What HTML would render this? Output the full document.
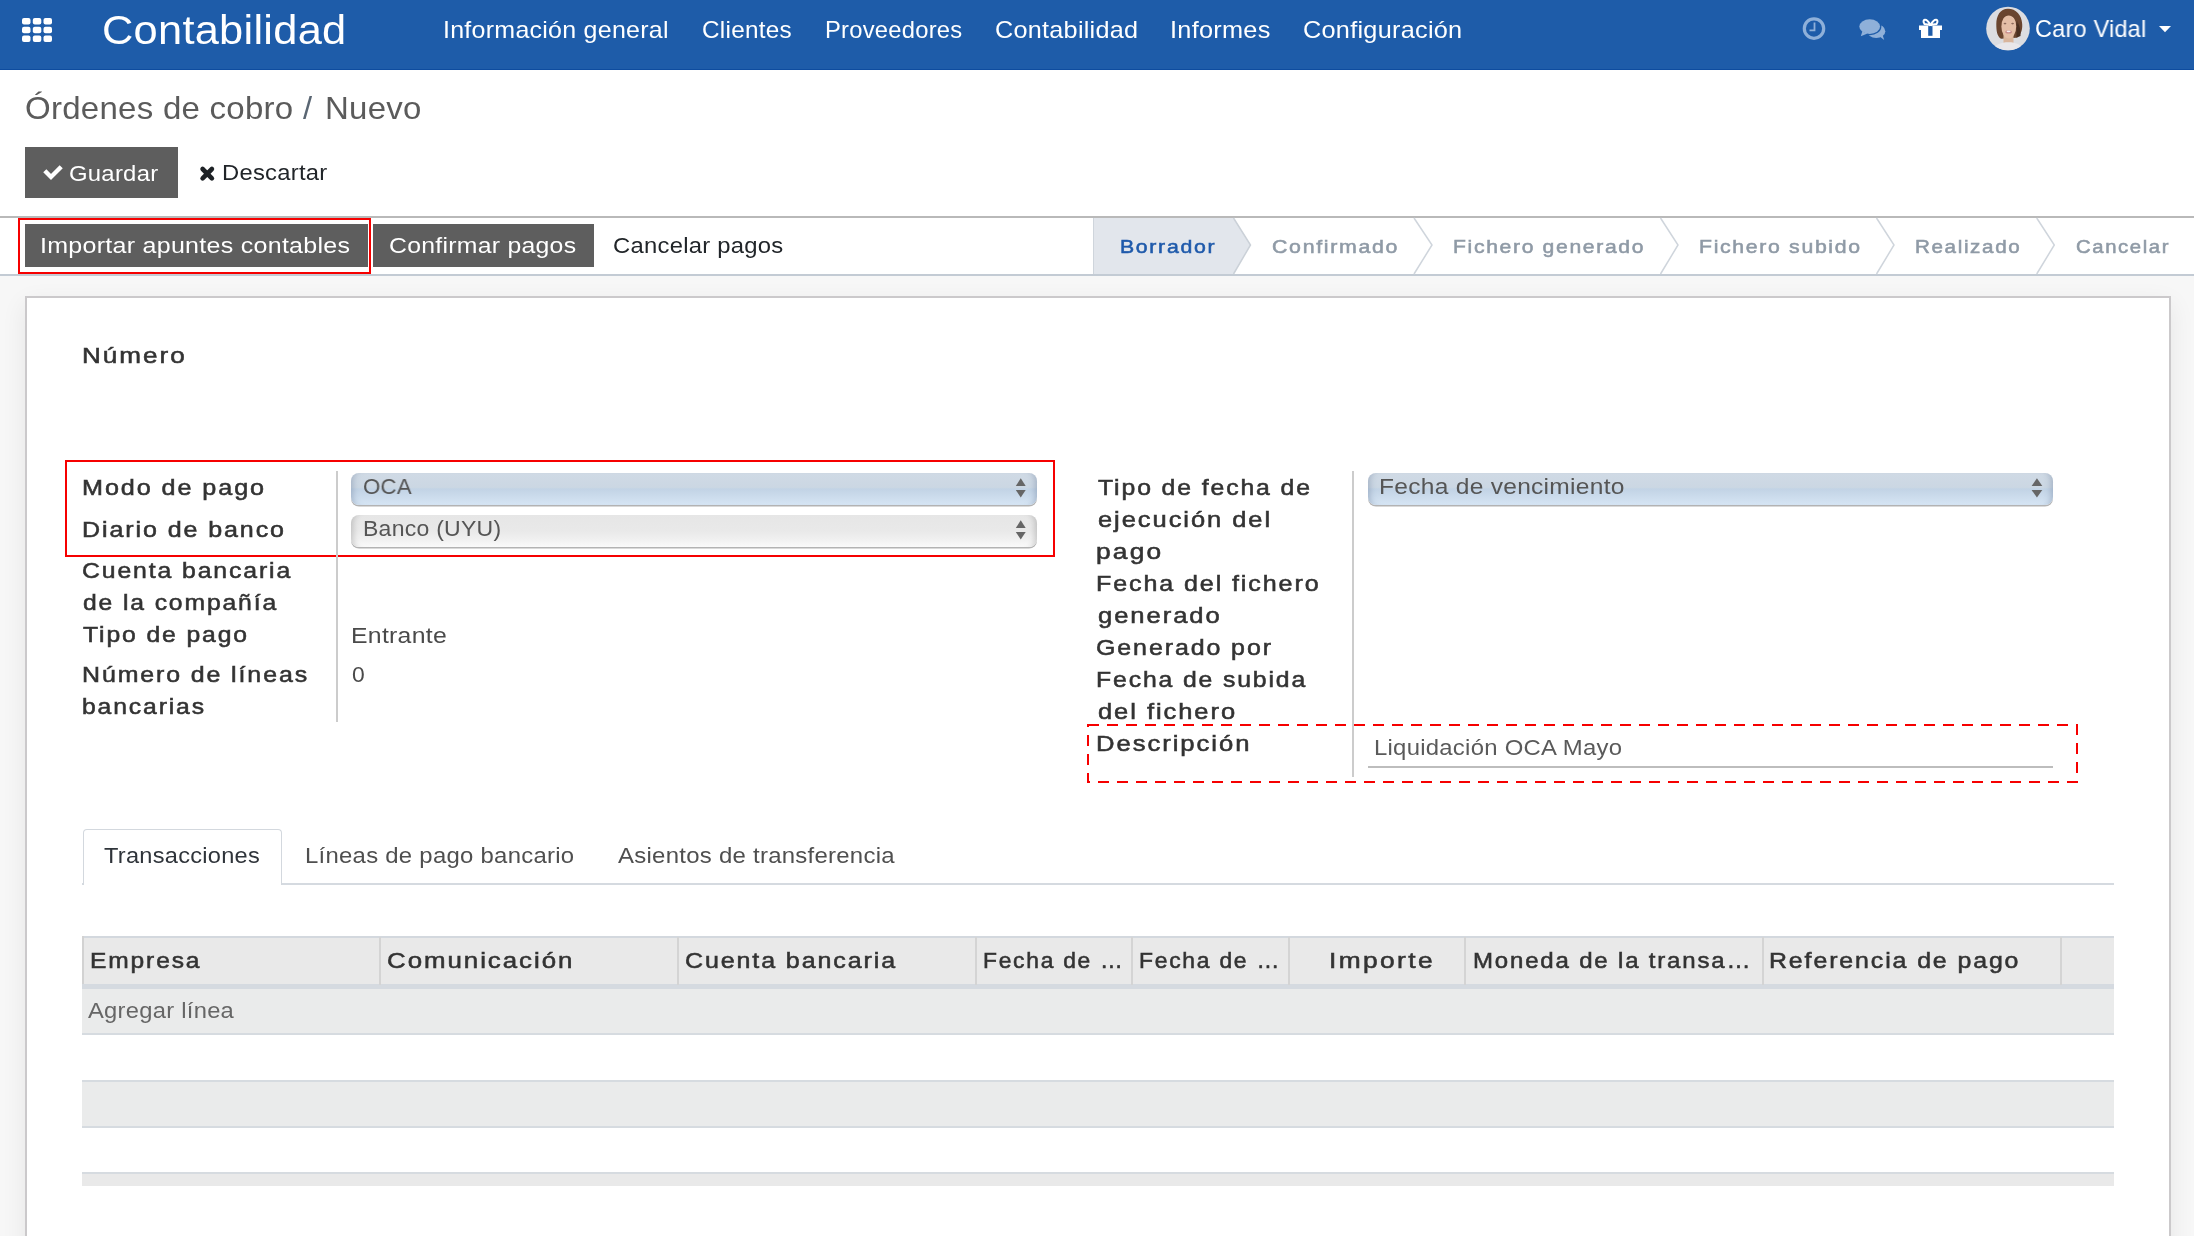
<!DOCTYPE html>
<html><head><meta charset="utf-8"><style>
html,body{margin:0;padding:0;}
body{width:2194px;height:1236px;overflow:hidden;position:relative;background:#f7f7f7;font-family:"Liberation Sans",sans-serif;}
.a{position:absolute;box-sizing:border-box;}
.tx{position:absolute;white-space:nowrap;font-family:"Liberation Sans",sans-serif;will-change:transform;transform-origin:0 0;}
</style></head><body>
<!-- navbar -->
<div class="a" style="left:0;top:0;width:2194px;height:70px;background:#1e5ca9;border-bottom:1px solid #0e4c9f;"></div>
<svg class="a" style="left:0;top:0" width="2194" height="70">
  <g fill="#ffffff">
    <rect x="22" y="18" width="8.5" height="6.5" rx="2"/><rect x="32.8" y="18" width="8.5" height="6.5" rx="2"/><rect x="43.5" y="18" width="8.5" height="6.5" rx="2"/>
    <rect x="22" y="26.8" width="8.5" height="6.5" rx="2"/><rect x="32.8" y="26.8" width="8.5" height="6.5" rx="2"/><rect x="43.5" y="26.8" width="8.5" height="6.5" rx="2"/>
    <rect x="22" y="35.5" width="8.5" height="6.5" rx="2"/><rect x="32.8" y="35.5" width="8.5" height="6.5" rx="2"/><rect x="43.5" y="35.5" width="8.5" height="6.5" rx="2"/>
  </g>
  <!-- clock -->
  <g fill="none" stroke="#8fb0d9" stroke-width="3.2">
    <circle cx="1814" cy="28.6" r="9.7"/>
  </g>
  <path d="M1814.5 22.5 V30.3 H1809.5" fill="none" stroke="#8fb0d9" stroke-width="1.8"/>
  <!-- chat -->
  <g fill="#8fb0d9">
    <ellipse cx="1876.2" cy="31.2" rx="9.1" ry="6.9"/>
    <path d="M1879 36 L1884.2 40 L1882.6 35 Z"/>
  </g>
  <ellipse cx="1869.7" cy="26.6" rx="10.4" ry="7.3" fill="#8fb0d9" stroke="#1e5ca9" stroke-width="2.6"/>
  <ellipse cx="1869.7" cy="26.6" rx="10.4" ry="7.3" fill="#8fb0d9"/>
  <path d="M1862.3 31.5 L1860.8 36.2 L1867.5 33.6 Z" fill="#8fb0d9"/>
  <!-- gift -->
  <g fill="#ffffff">
    <path d="M1919 25.5 H1942 V30 H1940 V38 H1921 V30 H1919 Z"/>
  </g>
  <rect x="1928.2" y="25.2" width="4.3" height="10.6" fill="#1e5ca9"/>
  <g fill="none" stroke="#ffffff" stroke-width="2">
    <path d="M1930.5 25 C1926 17 1921.5 19.5 1924.5 24 Z"/>
    <path d="M1930.5 25 C1935 17 1939.5 19.5 1936.5 24 Z"/>
  </g>
  <!-- avatar -->
  <defs><clipPath id="av"><circle cx="2008" cy="28.5" r="21.8"/></clipPath></defs>
  <circle cx="2008" cy="28.5" r="21.8" fill="#dcdde1"/>
  <g clip-path="url(#av)">
    <path d="M2008 8.8 C2000 8.8 1996.3 16 1996.3 24 C1996.3 31 1997 36 2001 38.8 L2016.5 37.8 C2021 35 2022.6 30 2022.2 24 C2021.7 15 2016 8.8 2008 8.8 Z" fill="#6a452f"/>
    <path d="M2016.5 20 C2019 24 2021 30 2020.5 36 L2016.5 37.8 Z" fill="#4a2f20"/>
    <rect x="2003.5" y="34" width="10" height="10" fill="#d9b59c"/>
    <ellipse cx="2008.8" cy="26.5" rx="7.4" ry="12" fill="#e4bea6"/>
    <path d="M1999.5 25 C1999.5 17 2004 13.2 2009 13.6 C2014 14 2017.5 18 2017.8 25 C2016 19 2012.5 15.8 2008.8 15.6 C2004.5 16 2001.2 19.5 1999.5 25 Z" fill="#6a452f"/>
    <path d="M1991 53 C1993 45.5 2000 42.3 2008.5 42.3 C2017 42.3 2023 45.5 2025 53 Z" fill="#e9e7ea"/>
    <ellipse cx="2005" cy="23.6" rx="1.4" ry="0.8" fill="#8c6a5c"/>
    <ellipse cx="2012.6" cy="23.6" rx="1.4" ry="0.8" fill="#8c6a5c"/>
    <ellipse cx="2008.6" cy="31.9" rx="3.3" ry="1.7" fill="#c98c8c"/>
    <ellipse cx="2008.6" cy="31.4" rx="2.1" ry="0.8" fill="#f4eded"/>
  </g>
  <!-- caret -->
  <path d="M2159 26 H2171 L2165 32.2 Z" fill="#ffffff"/>
</svg>

<!-- control panel white -->
<div class="a" style="left:0;top:70px;width:2194px;height:146px;background:#ffffff;"></div>
<!-- Guardar button -->
<div class="a" style="left:25px;top:147px;width:153px;height:51px;background:#5e5e5e;"></div>
<svg class="a" style="left:0;top:140px" width="240" height="60">
  <path d="M44.8 30.8 L51 37 L61.2 26.8" fill="none" stroke="#ffffff" stroke-width="4.4" stroke-linejoin="miter"/>
  <path d="M202.6 29 L211.9 38.3 M211.9 29 L202.6 38.3" fill="none" stroke="#1e2226" stroke-width="4.6" stroke-linecap="round"/>
</svg>

<!-- statusbar -->
<div class="a" style="left:0;top:216px;width:2194px;height:60px;background:#ffffff;border-top:2px solid #b9b9b9;border-bottom:2px solid #c3cbd4;"></div>
<div class="a" style="left:25px;top:224px;width:343px;height:43px;background:#5e5e5e;"></div>
<div class="a" style="left:373px;top:224px;width:221px;height:43px;background:#5e5e5e;"></div>
<div class="a" style="left:18px;top:218px;width:353px;height:56px;border:2px solid #f60000;"></div>
<svg class="a" style="left:0;top:0" width="2194" height="280">
  <polygon points="1093,218 1233.5,218 1250.5,245 1233.5,274 1093,274" fill="#e2e6ec"/>
  <line x1="1093.5" y1="218" x2="1093.5" y2="274" stroke="#cfd5dc" stroke-width="1"/>
  <polyline points="1233.5,218 1250.5,245 1233.5,274" fill="none" stroke="#cbd1d8" stroke-width="1.5"/>
  <g fill="none" stroke="#cfd5dc" stroke-width="1.5">
    <polyline points="1414,218 1432,245 1414,274"/>
    <polyline points="1660.5,218 1678,245 1660.5,274"/>
    <polyline points="1876.5,218 1894,245 1876.5,274"/>
    <polyline points="2036.7,218 2054.3,245 2036.7,274"/>
  </g>
</svg>

<!-- sheet -->
<div class="a" style="left:25px;top:296px;width:2146px;height:1000px;background:#ffffff;border:2px solid #cbc9cb;box-shadow:0 8px 24px rgba(0,0,0,0.075);"></div>

<!-- left group -->
<div class="a" style="left:65px;top:460px;width:990px;height:97px;border:2px solid #f60000;"></div>
<div class="a" style="left:336px;top:471px;width:1.5px;height:251px;background:#cccccc;"></div>
<div class="a" style="left:351px;top:473px;width:686px;height:32px;border-radius:8px;background:linear-gradient(#d0dae5 0%,#cbd7e3 45%,#c2d3e5 50%,#d6e5f4 100%);box-shadow:inset 8px 0 6px -6px rgba(90,110,140,0.35), inset -8px 0 6px -6px rgba(90,110,140,0.35), 0 1.5px 0 #b3b3b3;"></div>
<div class="a" style="left:351px;top:515px;width:686px;height:32px;border-radius:8px;background:linear-gradient(#e6e6e6 0%,#e9e9e9 50%,#f0f0f0 75%,#fafafa 100%);box-shadow:inset 8px 0 6px -6px rgba(0,0,0,0.18), inset -8px 0 6px -6px rgba(0,0,0,0.18), 0 1.5px 0 #b3b3b3;"></div>


<!-- right group -->
<div class="a" style="left:1352px;top:471px;width:1.5px;height:306px;background:#cccccc;"></div>
<div class="a" style="left:1368px;top:473px;width:685px;height:31.5px;border-radius:8px;background:linear-gradient(#d0dae5 0%,#cbd7e3 45%,#c2d3e5 50%,#d6e5f4 100%);box-shadow:inset 8px 0 6px -6px rgba(90,110,140,0.35), inset -8px 0 6px -6px rgba(90,110,140,0.35), 0 1.5px 0 #b3b3b3;"></div>
<div class="a" style="left:1368px;top:766px;width:685px;height:2px;background:#bdbdbd;"></div>
<svg class="a" style="left:1085px;top:722px" width="995" height="64">
  <rect x="3" y="3" width="989" height="57" fill="none" stroke="#f60000" stroke-width="2" stroke-dasharray="11 8"/>
</svg>

<svg class="a" style="left:0;top:0" width="2194" height="800">
  <g fill="#666666">
    <polygon points="1015.8,486 1025.7,486 1020.75,478.2"/>
    <polygon points="1015.8,490 1025.7,490 1020.75,497.6"/>
    <polygon points="1015.8,528 1025.7,528 1020.75,520.3"/>
    <polygon points="1015.8,532 1025.7,532 1020.75,539.6"/>
    <polygon points="2031.6,486 2042.3,486 2036.95,478.2"/>
    <polygon points="2031.6,490 2042.3,490 2036.95,497.6"/>
  </g>
</svg>
<!-- tabs -->
<div class="a" style="left:82px;top:883px;width:2032px;height:1.5px;background:#d5dae0;"></div>
<div class="a" style="left:82.5px;top:828.5px;width:199px;height:56px;background:#ffffff;border:1.5px solid #d3d8de;border-bottom:none;border-radius:4px 4px 0 0;"></div>

<!-- table -->
<div class="a" style="left:82px;top:936px;width:2032px;height:53px;background:#e9e9e9;border-top:2px solid #d3d8de;border-bottom:5px solid #d5dae0;"></div>
<div class="a" style="left:82px;top:936px;width:1.5px;height:48px;background:#d2d2d2;"></div>
<div class="a" style="left:379.25px;top:937px;width:1.5px;height:48px;background:#d4d4d4;"></div>
<div class="a" style="left:677.25px;top:937px;width:1.5px;height:48px;background:#d4d4d4;"></div>
<div class="a" style="left:975.25px;top:937px;width:1.5px;height:48px;background:#d4d4d4;"></div>
<div class="a" style="left:1131.25px;top:937px;width:1.5px;height:48px;background:#d4d4d4;"></div>
<div class="a" style="left:1288.25px;top:937px;width:1.5px;height:48px;background:#d4d4d4;"></div>
<div class="a" style="left:1464.25px;top:937px;width:1.5px;height:48px;background:#d4d4d4;"></div>
<div class="a" style="left:1762.25px;top:937px;width:1.5px;height:48px;background:#d4d4d4;"></div>
<div class="a" style="left:2060.25px;top:937px;width:1.5px;height:48px;background:#d4d4d4;"></div>
<div class="a" style="left:82px;top:989px;width:2032px;height:46px;background:#eaebeb;border-bottom:2px solid #d6dbe0;"></div>
<div class="a" style="left:82px;top:1080px;width:2032px;height:47.5px;background:#eaebeb;border-top:2px solid #d6dbe0;border-bottom:2px solid #d6dbe0;"></div>
<div class="a" style="left:82px;top:1172px;width:2032px;height:14px;background:#e9e9e9;border-top:2px solid #d6dbe0;"></div>

<div class="tx" style="left:102.03px;top:11.42px;font-size:39.9px;line-height:39.9px;font-weight:normal;color:#ffffff;letter-spacing:0.250px;transform:scaleX(1.0874125677026167);">Contabilidad</div>
<div class="tx" style="left:443.38px;top:18.52px;font-size:23.6px;line-height:23.6px;font-weight:normal;color:#ffffff;letter-spacing:0.250px;transform:scaleX(1.05868415038672);">Información general</div>
<div class="tx" style="left:702.17px;top:18.52px;font-size:23.6px;line-height:23.6px;font-weight:normal;color:#ffffff;letter-spacing:0.250px;transform:scaleX(1.0306076490912957);">Clientes</div>
<div class="tx" style="left:824.59px;top:18.52px;font-size:23.6px;line-height:23.6px;font-weight:normal;color:#ffffff;letter-spacing:0.250px;transform:scaleX(1.0068573062495318);">Proveedores</div>
<div class="tx" style="left:994.93px;top:18.52px;font-size:23.6px;line-height:23.6px;font-weight:normal;color:#ffffff;letter-spacing:0.250px;transform:scaleX(1.0682902031292236);">Contabilidad</div>
<div class="tx" style="left:1170.46px;top:18.52px;font-size:23.6px;line-height:23.6px;font-weight:normal;color:#ffffff;letter-spacing:0.250px;transform:scaleX(1.0723412871184084);">Informes</div>
<div class="tx" style="left:1302.93px;top:18.52px;font-size:23.6px;line-height:23.6px;font-weight:normal;color:#ffffff;letter-spacing:0.250px;transform:scaleX(1.0712720558037547);">Configuración</div>
<div class="tx" style="left:2035.01px;top:18.42px;font-size:23.6px;line-height:23.6px;font-weight:normal;color:#ffffff;letter-spacing:0.250px;transform:scaleX(0.9932586725606991);">Caro Vidal</div>
<div class="tx" style="left:24.85px;top:93.12px;font-size:31.4px;line-height:31.4px;font-weight:normal;color:#5b5b5b;letter-spacing:0.250px;transform:scaleX(1.0517789607394734);">Órdenes de cobro</div>
<div class="tx" style="left:303.00px;top:93.12px;font-size:31.4px;line-height:31.4px;font-weight:normal;color:#5a6673;letter-spacing:0.000px;transform:scaleX(1.04);">/</div>
<div class="tx" style="left:324.50px;top:93.12px;font-size:31.4px;line-height:31.4px;font-weight:normal;color:#5b5b5b;letter-spacing:0.250px;transform:scaleX(1.050620431194724);">Nuevo</div>
<div class="tx" style="left:69.45px;top:161.50px;font-size:22.8px;line-height:22.8px;font-weight:normal;color:#ffffff;letter-spacing:0.250px;transform:scaleX(1.046868268043831);">Guardar</div>
<div class="tx" style="left:222.23px;top:161.82px;font-size:22.3px;line-height:22.3px;font-weight:normal;color:#212529;letter-spacing:0.250px;transform:scaleX(1.0659721772346227);">Descartar</div>
<div class="tx" style="left:40.28px;top:235.45px;font-size:22.5px;line-height:22.5px;font-weight:normal;color:#ffffff;letter-spacing:0.250px;transform:scaleX(1.111477822861752);">Importar apuntes contables</div>
<div class="tx" style="left:389.40px;top:235.45px;font-size:22.5px;line-height:22.5px;font-weight:normal;color:#ffffff;letter-spacing:0.250px;transform:scaleX(1.1016062948335266);">Confirmar pagos</div>
<div class="tx" style="left:613.24px;top:235.45px;font-size:22.5px;line-height:22.5px;font-weight:normal;color:#212529;letter-spacing:0.250px;transform:scaleX(1.0582781234081415);">Cancelar pagos</div>
<div class="tx" style="left:1120.28px;top:236.92px;font-size:19px;line-height:19px;font-weight:normal;color:#1f5aab;letter-spacing:1.500px;transform:scaleX(1.118976228908527);-webkit-text-stroke:0.55px currentColor;">Borrador</div>
<div class="tx" style="left:1272.00px;top:236.92px;font-size:19px;line-height:19px;font-weight:normal;color:#8f9aa6;letter-spacing:1.500px;transform:scaleX(1.1228770631883698);-webkit-text-stroke:0.55px currentColor;">Confirmado</div>
<div class="tx" style="left:1453.19px;top:236.92px;font-size:19px;line-height:19px;font-weight:normal;color:#8f9aa6;letter-spacing:1.500px;transform:scaleX(1.110899798205118);-webkit-text-stroke:0.55px currentColor;">Fichero generado</div>
<div class="tx" style="left:1698.88px;top:236.92px;font-size:19px;line-height:19px;font-weight:normal;color:#8f9aa6;letter-spacing:1.500px;transform:scaleX(1.1174582297211202);-webkit-text-stroke:0.55px currentColor;">Fichero subido</div>
<div class="tx" style="left:1915.42px;top:236.92px;font-size:19px;line-height:19px;font-weight:normal;color:#8f9aa6;letter-spacing:1.500px;transform:scaleX(1.0849968367289204);-webkit-text-stroke:0.55px currentColor;">Realizado</div>
<div class="tx" style="left:2076.00px;top:236.92px;font-size:19px;line-height:19px;font-weight:normal;color:#8f9aa6;letter-spacing:1.500px;transform:scaleX(1.0675386045261628);-webkit-text-stroke:0.55px currentColor;">Cancelar</div>
<div class="tx" style="left:82.03px;top:344.72px;font-size:22.3px;line-height:22.3px;font-weight:normal;color:#333333;letter-spacing:1.700px;transform:scaleX(1.1689607130248933);-webkit-text-stroke:0.55px currentColor;">Número</div>
<div class="tx" style="left:82.07px;top:477.02px;font-size:22.3px;line-height:22.3px;font-weight:normal;color:#333333;letter-spacing:1.700px;transform:scaleX(1.1290649901915908);-webkit-text-stroke:0.55px currentColor;">Modo de pago</div>
<div class="tx" style="left:82.08px;top:519.22px;font-size:22.3px;line-height:22.3px;font-weight:normal;color:#333333;letter-spacing:1.700px;transform:scaleX(1.1222128953804347);-webkit-text-stroke:0.55px currentColor;">Diario de banco</div>
<div class="tx" style="left:82.09px;top:560.42px;font-size:22.3px;line-height:22.3px;font-weight:normal;color:#333333;letter-spacing:1.700px;transform:scaleX(1.1110959647588294);-webkit-text-stroke:0.55px currentColor;">Cuenta bancaria</div>
<div class="tx" style="left:83.20px;top:591.72px;font-size:22.3px;line-height:22.3px;font-weight:normal;color:#333333;letter-spacing:1.700px;transform:scaleX(1.1063966689967921);-webkit-text-stroke:0.55px currentColor;">de la compañía</div>
<div class="tx" style="left:83.20px;top:624.22px;font-size:22.3px;line-height:22.3px;font-weight:normal;color:#333333;letter-spacing:1.700px;transform:scaleX(1.1081098148154542);-webkit-text-stroke:0.55px currentColor;">Tipo de pago</div>
<div class="tx" style="left:82.08px;top:664.32px;font-size:22.3px;line-height:22.3px;font-weight:normal;color:#333333;letter-spacing:1.700px;transform:scaleX(1.117087675989239);-webkit-text-stroke:0.55px currentColor;">Número de líneas</div>
<div class="tx" style="left:82.09px;top:696.22px;font-size:22.3px;line-height:22.3px;font-weight:normal;color:#333333;letter-spacing:1.700px;transform:scaleX(1.1069421105297683);-webkit-text-stroke:0.55px currentColor;">bancarias</div>
<div class="tx" style="left:1097.50px;top:476.62px;font-size:22.3px;line-height:22.3px;font-weight:normal;color:#333333;letter-spacing:1.700px;transform:scaleX(1.1109518436403094);-webkit-text-stroke:0.55px currentColor;">Tipo de fecha de</div>
<div class="tx" style="left:1097.50px;top:508.52px;font-size:22.3px;line-height:22.3px;font-weight:normal;color:#333333;letter-spacing:1.700px;transform:scaleX(1.1430308969297187);-webkit-text-stroke:0.55px currentColor;">ejecución del</div>
<div class="tx" style="left:1096.32px;top:540.72px;font-size:22.3px;line-height:22.3px;font-weight:normal;color:#333333;letter-spacing:1.899px;transform:scaleX(1.18);-webkit-text-stroke:0.55px currentColor;">pago</div>
<div class="tx" style="left:1096.38px;top:572.72px;font-size:22.3px;line-height:22.3px;font-weight:normal;color:#333333;letter-spacing:1.700px;transform:scaleX(1.1227580836308204);-webkit-text-stroke:0.55px currentColor;">Fecha del fichero</div>
<div class="tx" style="left:1097.50px;top:604.72px;font-size:22.3px;line-height:22.3px;font-weight:normal;color:#333333;letter-spacing:1.700px;transform:scaleX(1.14728538520406);-webkit-text-stroke:0.55px currentColor;">generado</div>
<div class="tx" style="left:1096.38px;top:636.72px;font-size:22.3px;line-height:22.3px;font-weight:normal;color:#333333;letter-spacing:1.700px;transform:scaleX(1.1195457077142965);-webkit-text-stroke:0.55px currentColor;">Generado por</div>
<div class="tx" style="left:1096.39px;top:668.72px;font-size:22.3px;line-height:22.3px;font-weight:normal;color:#333333;letter-spacing:1.700px;transform:scaleX(1.1090827262735414);-webkit-text-stroke:0.55px currentColor;">Fecha de subida</div>
<div class="tx" style="left:1097.50px;top:700.72px;font-size:22.3px;line-height:22.3px;font-weight:normal;color:#333333;letter-spacing:1.700px;transform:scaleX(1.1433617979054962);-webkit-text-stroke:0.55px currentColor;">del fichero</div>
<div class="tx" style="left:1096.35px;top:732.72px;font-size:22.3px;line-height:22.3px;font-weight:normal;color:#333333;letter-spacing:1.700px;transform:scaleX(1.1496693977732473);-webkit-text-stroke:0.55px currentColor;">Descripción</div>
<div class="tx" style="left:362.82px;top:475.87px;font-size:22.6px;line-height:22.6px;font-weight:normal;color:#555555;letter-spacing:0.250px;transform:scaleX(0.981967731730465);">OCA</div>
<div class="tx" style="left:362.78px;top:518.27px;font-size:22.6px;line-height:22.6px;font-weight:normal;color:#555555;letter-spacing:0.250px;transform:scaleX(1.01889039705485);">Banco (UYU)</div>
<div class="tx" style="left:1378.51px;top:475.87px;font-size:22.6px;line-height:22.6px;font-weight:normal;color:#555555;letter-spacing:0.250px;transform:scaleX(1.0868611269501303);">Fecha de vencimiento</div>
<div class="tx" style="left:351.07px;top:624.68px;font-size:22px;line-height:22px;font-weight:normal;color:#4a4a4a;letter-spacing:0.250px;transform:scaleX(1.1269031030820758);">Entrante</div>
<div class="tx" style="left:351.70px;top:663.88px;font-size:22px;line-height:22px;font-weight:normal;color:#4a4a4a;letter-spacing:0.000px;transform:scaleX(1.04);">0</div>
<div class="tx" style="left:1374.25px;top:736.30px;font-size:22.8px;line-height:22.8px;font-weight:normal;color:#5a5a5a;letter-spacing:0.250px;transform:scaleX(1.0477187924662656);">Liquidación OCA Mayo</div>
<div class="tx" style="left:103.50px;top:845.35px;font-size:22.5px;line-height:22.5px;font-weight:normal;color:#2f343a;letter-spacing:0.250px;transform:scaleX(1.0490386294086838);">Transacciones</div>
<div class="tx" style="left:304.64px;top:845.35px;font-size:22.5px;line-height:22.5px;font-weight:normal;color:#4f4f4f;letter-spacing:0.250px;transform:scaleX(1.0628393276159933);">Líneas de pago bancario</div>
<div class="tx" style="left:618.40px;top:845.35px;font-size:22.5px;line-height:22.5px;font-weight:normal;color:#4f4f4f;letter-spacing:0.250px;transform:scaleX(1.0642113267555477);">Asientos de transferencia</div>
<div class="tx" style="left:89.90px;top:949.72px;font-size:22.3px;line-height:22.3px;font-weight:normal;color:#333333;letter-spacing:1.700px;transform:scaleX(1.1007908611951367);-webkit-text-stroke:0.55px currentColor;">Empresa</div>
<div class="tx" style="left:386.64px;top:949.72px;font-size:22.3px;line-height:22.3px;font-weight:normal;color:#333333;letter-spacing:1.700px;transform:scaleX(1.1587610864647857);-webkit-text-stroke:0.55px currentColor;">Comunicación</div>
<div class="tx" style="left:684.68px;top:949.72px;font-size:22.3px;line-height:22.3px;font-weight:normal;color:#333333;letter-spacing:1.700px;transform:scaleX(1.1207204726345075);-webkit-text-stroke:0.55px currentColor;">Cuenta bancaria</div>
<div class="tx" style="left:983.48px;top:949.72px;font-size:22.3px;line-height:22.3px;font-weight:normal;color:#333333;letter-spacing:1.700px;transform:scaleX(1.022776929255432);-webkit-text-stroke:0.55px currentColor;">Fecha de …</div>
<div class="tx" style="left:1139.27px;top:949.72px;font-size:22.3px;line-height:22.3px;font-weight:normal;color:#333333;letter-spacing:1.700px;transform:scaleX(1.0257740777660713);-webkit-text-stroke:0.55px currentColor;">Fecha de …</div>
<div class="tx" style="left:1328.64px;top:949.72px;font-size:22.3px;line-height:22.3px;font-weight:normal;color:#333333;letter-spacing:2.039px;transform:scaleX(1.18);-webkit-text-stroke:0.55px currentColor;">Importe</div>
<div class="tx" style="left:1472.72px;top:949.72px;font-size:22.3px;line-height:22.3px;font-weight:normal;color:#333333;letter-spacing:1.700px;transform:scaleX(1.0758689418417966);-webkit-text-stroke:0.55px currentColor;">Moneda de la transa…</div>
<div class="tx" style="left:1769.48px;top:949.72px;font-size:22.3px;line-height:22.3px;font-weight:normal;color:#333333;letter-spacing:1.700px;transform:scaleX(1.1160720467189114);-webkit-text-stroke:0.55px currentColor;">Referencia de pago</div>
<div class="tx" style="left:87.90px;top:1000.44px;font-size:22.4px;line-height:22.4px;font-weight:normal;color:#666666;letter-spacing:0.250px;transform:scaleX(1.0610334605058673);">Agregar línea</div>
</body></html>
